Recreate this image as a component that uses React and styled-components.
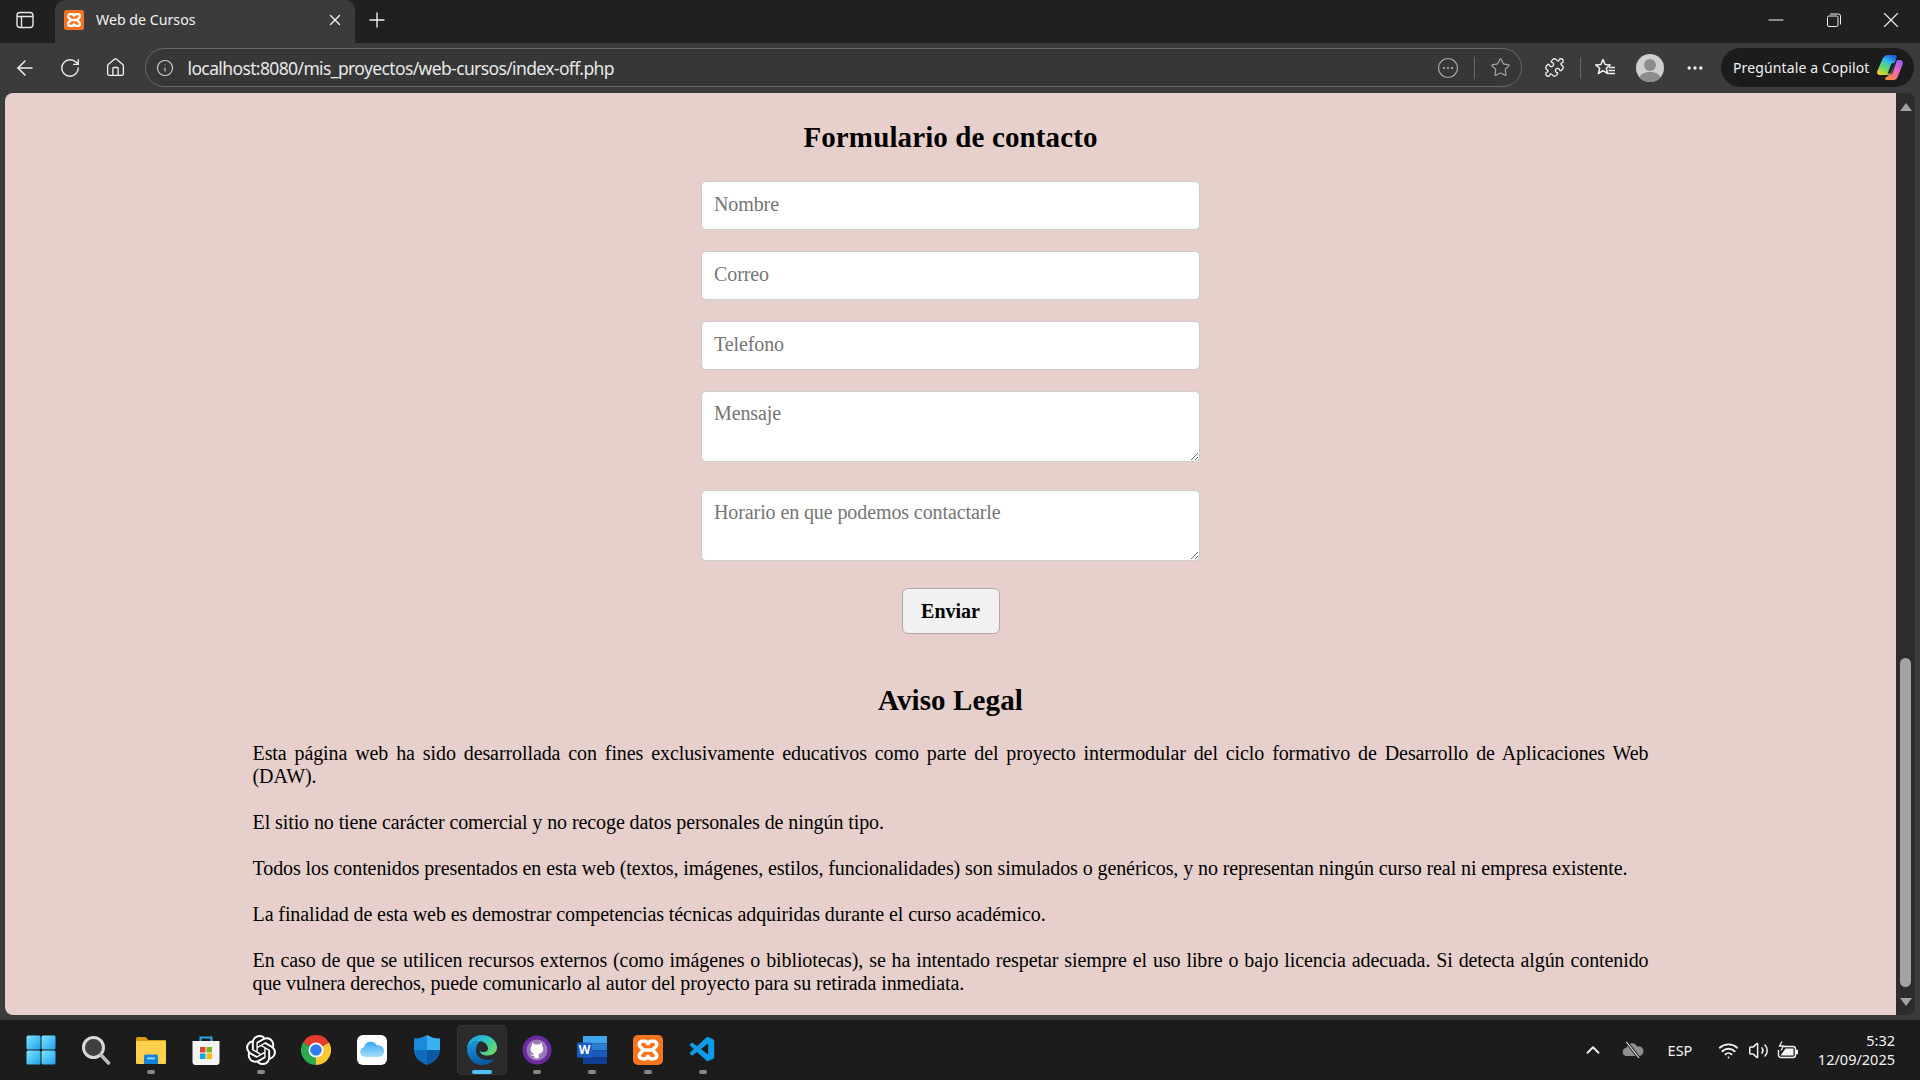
import React from "react";
import styled, { createGlobalStyle } from "styled-components";
import {
  ArrowLeft,
  RotateCw,
  Home,
  Info,
  Star,
  Puzzle,
  Ellipsis,
  Plus,
  X,
  Minus,
  ChevronUp,
  Wifi,
  Volume2,
} from "lucide-react";
import { SiOpenai } from "react-icons/si";
import { VscVscode } from "react-icons/vsc";

const GlobalStyle = createGlobalStyle`
  html, body {
    margin: 0;
    padding: 0;
    height: 100%;
    overflow: hidden;
    background: #3b3b3b;
  }
  * {
    box-sizing: border-box;
  }
`;

const Screen = styled.div`
  width: 1920px;
  height: 1080px;
  display: flex;
  flex-direction: column;
  overflow: hidden;
  font-family: "Noto Sans", "Open Sans", sans-serif;
`;

const TabStrip = styled.div`
  height: 43px;
  background: #202020;
  display: flex;
  align-items: stretch;
  color: #fff;
  flex: none;
`;

const SidebarButton = styled.div`
  width: 49px;
  margin-right: 6px;
  padding-bottom: 4px;
  display: flex;
  align-items: center;
  justify-content: center;
`;

const Tab = styled.div`
  width: 300px;
  background: #3b3b3b;
  border-radius: 10px 10px 0 0;
  display: flex;
  align-items: center;
  padding: 0 11px 4px 9px;
  gap: 12px;
`;

const TabTitle = styled.span`
  flex: 1;
  font-size: 14.2px;
  color: #f2f2f2;
  white-space: nowrap;
`;

const NewTab = styled.div`
  width: 44px;
  padding-bottom: 4px;
  display: flex;
  align-items: center;
  justify-content: center;
`;

const WindowControls = styled.div`
  margin-left: auto;
  display: flex;
`;

const WindowButton = styled.div`
  width: 57.6px;
  padding-bottom: 4px;
  display: flex;
  align-items: center;
  justify-content: center;
`;

const Toolbar = styled.div`
  height: 50px;
  background: #3b3b3b;
  display: flex;
  align-items: center;
  padding: 0 6px 1px 2.5px;
  color: #f0f0f0;
  flex: none;
`;

const ToolButton = styled.div`
  width: ${({ $w }) => $w || 30}px;
  height: 34px;
  margin-left: ${({ $ml }) => $ml || 0}px;
  flex: none;
  display: flex;
  align-items: center;
  justify-content: center;
`;

const AddressBar = styled.div`
  width: 1377px;
  height: 39px;
  margin-left: 7.5px;
  border: 1px solid #6a6a6a;
  border-radius: 20px;
  background: #373737;
  display: flex;
  align-items: center;
  padding: 0 6px 0 7px;
  flex: none;
`;

const Url = styled.span`
  margin-left: 10.5px;
  font-size: 17.5px;
  letter-spacing: -0.62px;
  color: #e8e8e8;
  white-space: nowrap;
`;

const AddressEnd = styled.div`
  margin-left: auto;
  display: flex;
  align-items: center;
`;

const Divider = styled.div`
  width: 1px;
  height: 22px;
  background: #666;
  margin-left: ${({ $ml }) => $ml || 0}px;
  flex: none;
`;

const CopilotPill = styled.div`
  width: 193px;
  height: 39px;
  margin-left: 11px;
  border-radius: 20px;
  background: #1c1c1c;
  display: flex;
  align-items: center;
  padding: 0 10px 0 12px;
  justify-content: space-between;
  flex: none;
`;

const CopilotText = styled.span`
  font-size: 14px;
  letter-spacing: 0.12px;
  color: #f2f2f2;
  white-space: nowrap;
`;

const Viewport = styled.div`
  flex: 1;
  min-height: 0;
  background: #3b3b3b;
  display: flex;
  padding: 0 5px 5px;
`;

const Page = styled.main`
  flex: 1;
  background: #e7d0cc;
  border-radius: 8px 0 0 8px;
  padding-top: 27px;
  overflow: hidden;
  font-family: "Liberation Serif", "Times New Roman", serif;
  color: #000;
`;

const Heading = styled.h2`
  margin: 0;
  font-size: 29px;
  letter-spacing: 0.12px;
  line-height: 34px;
  font-weight: 700;
  text-align: center;
`;

const ContactForm = styled.form`
  width: 499px;
  margin: 27px auto 0;
  display: flex;
  flex-direction: column;
  align-items: center;
`;

const fieldStyles = `
  width: 100%;
  display: block;
  border: 1px solid #ccc;
  border-radius: 5px;
  background: #fff;
  font-family: "Liberation Serif", "Times New Roman", serif;
  font-size: 20px;
  letter-spacing: -0.1px;
  outline: none;
  &::placeholder { color: #757575; }
`;

const TextInput = styled.input`
  ${fieldStyles}
  height: 49px;
  padding: 0 12px 3px;
  margin-bottom: 21px;
`;

const TextArea = styled.textarea`
  ${fieldStyles}
  height: 71px;
  padding: 10px 12px 0;
  margin-bottom: ${({ $mb }) => $mb}px;
  resize: vertical;
`;

const SendButton = styled.button`
  width: 98px;
  height: 46px;
  border: 1px solid #aaa;
  border-radius: 6px;
  background: #f1f1f1;
  font-family: "Liberation Serif", "Times New Roman", serif;
  font-size: 20px;
  font-weight: 700;
  color: #000;
`;

const LegalSection = styled.section`
  margin-top: 49px;
`;

const LegalText = styled.p`
  width: 1396px;
  margin: 25px auto 0;
  font-size: 20px;
  letter-spacing: -0.09px;
  line-height: 23px;
  text-align: justify;
`;

const ScrollTrack = styled.div`
  width: 19px;
  background: #2c2c2c;
  border-radius: 0 8px 8px 0;
  padding: 10px 4px 9px;
  display: flex;
  flex-direction: column;
  align-items: center;
`;

const ArrowUp = styled.div`
  width: 0;
  height: 0;
  border-left: 6.5px solid transparent;
  border-right: 6.5px solid transparent;
  border-bottom: 8px solid #a3a3a3;
`;

const ArrowDown = styled.div`
  width: 0;
  height: 0;
  border-left: 6.5px solid transparent;
  border-right: 6.5px solid transparent;
  border-top: 8px solid #a3a3a3;
`;

const Thumb = styled.div`
  width: 11px;
  height: 329px;
  margin-top: auto;
  margin-bottom: 11px;
  border-radius: 6px;
  background: #a3a3a3;
`;

const Taskbar = styled.footer`
  height: 60px;
  background: #1c1c1c;
  display: flex;
  align-items: center;
  padding: 0 25px 0 15.5px;
  flex: none;
`;

const TaskApps = styled.div`
  display: flex;
  gap: 5.2px;
`;

const TaskButton = styled.div`
  position: relative;
  width: 50px;
  height: 50px;
  border-radius: 5px;
  display: flex;
  align-items: center;
  justify-content: center;
  background: ${({ $active }) => ($active ? "#2b2b2b" : "transparent")};
  box-shadow: ${({ $active }) => ($active ? "inset 0 0 0 1px #333" : "none")};
`;

const RunDot = styled.span`
  position: absolute;
  left: 50%;
  bottom: 1px;
  width: ${({ $active }) => ($active ? 20 : 8)}px;
  height: 4px;
  border-radius: 2px;
  transform: translateX(-50%);
  background: ${({ $active }) => ($active ? "#4cc2ff" : "#8a8a8a")};
`;

const Tray = styled.div`
  margin-left: auto;
  display: flex;
  align-items: center;
  color: #fff;
`;

const TrayItem = styled.div`
  width: ${({ $w }) => $w || 30}px;
  margin-left: ${({ $ml }) => $ml || 0}px;
  display: flex;
  align-items: center;
  justify-content: center;
  font-size: 14.5px;
  color: #f2f2f2;
`;

const Clock = styled.div`
  margin-left: auto;
  width: 92px;
  text-align: right;
  font-size: 14.5px;
  line-height: 19px;
  color: #f2f2f2;
`;

const XamppIcon = ({ size = 20, radius = 3 }) => (
  <svg width={size} height={size} viewBox="0 0 24 24">
    <rect width="24" height="24" rx={radius} fill="#f4751f" />
    <path
      d="M7.500 5h2.600c.9 0 1.100 1.800 1.900 1.800S13 5 13.900 5h2.600A2.500 2.500 0 0 1 19 7.500c0 2.400-3 2.900-3 4.500s3 2.100 3 4.500a2.500 2.500 0 0 1-2.500 2.500h-2.600c-.9 0-1.100-1.800-1.900-1.800s-1 1.800-1.900 1.800H7.500A2.500 2.500 0 0 1 5 16.500c0-2.400 3-2.900 3-4.500S5 9.900 5 7.500A2.500 2.500 0 0 1 7.500 5zM8 12h8"
      fill="none"
      stroke="#fff"
      strokeWidth="2.800"
    />
  </svg>
);

const SidebarIcon = () => (
  <svg width="18" height="18" viewBox="0 0 18 18" fill="none" stroke="#e6e6e6" strokeWidth="1.400">
    <rect x="1" y="1.500" width="16" height="15" rx="3" />
    <path d="M1 5.500h16M5.500 5.500v11" />
  </svg>
);

const RestoreIcon = () => (
  <svg width="14" height="14" viewBox="0 0 14 14" fill="none" stroke="#f0f0f0" strokeWidth="1">
    <rect x="0.500" y="3" width="10.500" height="10.500" rx="1.500" />
    <path d="M3 1h8.500A2 2 0 0 1 13.500 3v8.500" />
  </svg>
);

const ReaderIcon = () => (
  <svg width="22" height="22" viewBox="0 0 22 22" fill="none">
    <circle cx="11" cy="11" r="9.500" stroke="#a8a8a8" strokeWidth="1.200" />
    <circle cx="7" cy="11" r="1.100" fill="#b4b4b4" />
    <circle cx="11" cy="11" r="1.100" fill="#b4b4b4" />
    <circle cx="15" cy="11" r="1.100" fill="#b4b4b4" />
  </svg>
);

const FavoritesIcon = () => (
  <svg width="22" height="22" viewBox="0 0 22 22" fill="none" stroke="#f0f0f0" strokeWidth="1.500" strokeLinejoin="round">
    <path d="M9 2.500l2.100 5 5.200.4-4 3.400 1.300 5.200L9 13.700l-4.600 2.800 1.300-5.200-4-3.400 5.200-.4z" />
    <path d="M15 10.500h6M14.500 13.500h6.500M14 16.500h7" />
  </svg>
);

const Avatar = () => (
  <svg width="28" height="28" viewBox="0 0 28 28">
    <circle cx="14" cy="14" r="14" fill="#cfcfcf" />
    <circle cx="14" cy="11" r="6" fill="#8c8c8c" />
    <path d="M3.500 23.500C5 19.500 9 18 14 18s9 1.500 10.500 5.500A14 14 0 0 1 3.500 23.500z" fill="#8c8c8c" />
  </svg>
);

const CopilotLogo = () => (
  <svg width="28" height="27" viewBox="0 0 28 27">
    <defs>
      <linearGradient id="copA" x1="0.700" y1="0" x2="0.200" y2="1">
        <stop offset="0" stopColor="#1c5fe0" />
        <stop offset="0.300" stopColor="#2fb8ea" />
        <stop offset="0.650" stopColor="#62d86a" />
        <stop offset="1" stopColor="#f3d324" />
      </linearGradient>
      <linearGradient id="copB" x1="0.800" y1="0" x2="0.300" y2="1">
        <stop offset="0" stopColor="#9a5cf0" />
        <stop offset="0.500" stopColor="#ea68c0" />
        <stop offset="1" stopColor="#f88a3c" />
      </linearGradient>
    </defs>
    <path d="M12 1h6.500c1 0 1.800.6 2.200 1.500L16 18c-.6 2-2 3-4 3H4C1.500 21 .5 19 1.300 17L6.500 5C8 2.500 9.500 1 12 1z" fill="url(#copA)" />
    <path d="M21 6h2.500c2.500 0 4 2 3.300 4L22 22c-1 3-2.500 4-5 4h-6c-1 0-1.800-.5-2.300-1.500L13 21c2 0 3.500-1 4-3z" fill="url(#copB)" />
    <path d="M15.500 9.500l3.500-1-4 10.500-3.500 1z" fill="#1c1c1c" />
  </svg>
);

const StartIcon = () => (
  <svg width="30" height="30" viewBox="0 0 30 30">
    <defs>
      <linearGradient id="startA" x1="0" y1="0" x2="1" y2="1">
        <stop offset="0" stopColor="#7fe6ff" />
        <stop offset="1" stopColor="#1f9fe8" />
      </linearGradient>
    </defs>
    <rect x="0.500" y="0.500" width="14" height="14" rx="1.500" fill="url(#startA)" />
    <rect x="15.500" y="0.500" width="14" height="14" rx="1.500" fill="url(#startA)" />
    <rect x="0.500" y="15.500" width="14" height="14" rx="1.500" fill="url(#startA)" />
    <rect x="15.500" y="15.500" width="14" height="14" rx="1.500" fill="url(#startA)" />
  </svg>
);

const SearchIcon = () => (
  <svg width="30" height="30" viewBox="0 0 30 30" fill="none">
    <circle cx="12.500" cy="12.500" r="10" fill="#3f3f3f" stroke="#d8d8d8" strokeWidth="3" />
    <path d="M20 20l7.500 8" stroke="#bcbcbc" strokeWidth="3.500" strokeLinecap="round" />
  </svg>
);

const FolderIcon = () => (
  <svg width="30" height="30" viewBox="0 0 30 30">
    <path d="M0 3.500A1.500 1.500 0 0 1 1.500 2h8l3 3H30v4H0z" fill="#d99a10" />
    <path d="M0 6h28.500A1.500 1.500 0 0 1 30 7.500V28a1 1 0 0 1-1 1H1a1 1 0 0 1-1-1z" fill="#fccf4d" />
    <path d="M8 21a1.500 1.500 0 0 1 1.500-1.500h11A1.500 1.500 0 0 1 22 21v8H8z" fill="#1683d8" />
    <rect x="11" y="22.500" width="8" height="1.800" rx="0.900" fill="#9fdcff" />
  </svg>
);

const StoreIcon = () => (
  <svg width="30" height="30" viewBox="0 0 30 30">
    <path d="M9.500 7V2.500h11V7" fill="none" stroke="#27a9e6" strokeWidth="2" />
    <path d="M1.500 6h27v21a3 3 0 0 1-3 3h-21a3 3 0 0 1-3-3z" fill="#f4f4f4" />
    <rect x="9" y="12" width="5.500" height="5.500" fill="#e8452c" />
    <rect x="15.500" y="12" width="5.500" height="5.500" fill="#7cb518" />
    <rect x="9" y="18.500" width="5.500" height="5.500" fill="#0ea5e9" />
    <rect x="15.500" y="18.500" width="5.500" height="5.500" fill="#fbb80f" />
  </svg>
);

const ChromeIcon = () => (
  <svg width="30" height="30" viewBox="0 0 30 30">
    <path d="M15 15L2 7.500A15 15 0 0 1 28 7.500z" fill="#e33b2e" />
    <path d="M15 15L15 30A15 15 0 0 1 2 7.500z" fill="#2da94f" />
    <path d="M15 15L28 7.500A15 15 0 0 1 15 30z" fill="#fcc934" />
    <circle cx="15" cy="15" r="7.500" fill="#fff" />
    <circle cx="15" cy="15" r="5.800" fill="#2f7cf0" />
  </svg>
);

const CloudAppIcon = () => (
  <svg width="30" height="30" viewBox="0 0 30 30">
    <defs>
      <linearGradient id="cloudA" x1="0" y1="0" x2="0" y2="1">
        <stop offset="0" stopColor="#38a8f5" />
        <stop offset="1" stopColor="#a6dcfa" />
      </linearGradient>
    </defs>
    <rect width="30" height="30" rx="6" fill="#fff" />
    <path d="M8 22a5 5 0 0 1-1-9.800A7 7 0 0 1 20 10.500a5.800 5.800 0 0 1 2.500 11.500z" fill="url(#cloudA)" />
  </svg>
);

const ShieldIcon = () => (
  <svg width="30" height="30" viewBox="0 0 30 30">
    <path d="M15 0c4 2.500 8 3.500 13 3.500V15H15z" fill="#3ab0ee" />
    <path d="M15 0C11 2.500 7 3.500 2 3.500V15h13z" fill="#1b8ad8" />
    <path d="M2 15c0 7 5.500 12.500 13 15V15z" fill="#0f6cbd" />
    <path d="M28 15c0 7-5.500 12.500-13 15V15z" fill="#0b5aa3" />
  </svg>
);

const EdgeIcon = () => (
  <svg width="30" height="30" viewBox="0 0 30 30">
    <defs>
      <linearGradient id="edgeA" x1="0" y1="0.200" x2="1" y2="0.800">
        <stop offset="0" stopColor="#1b9de2" />
        <stop offset="0.500" stopColor="#2fc4c6" />
        <stop offset="1" stopColor="#72dc58" />
      </linearGradient>
      <linearGradient id="edgeB" x1="0" y1="0" x2="0.300" y2="1">
        <stop offset="0" stopColor="#1a9de0" />
        <stop offset="1" stopColor="#0c59a4" />
      </linearGradient>
    </defs>
    <path d="M15 0C6 0 0 6.500 0 14c2-5.500 7-8 11.500-8 5.500 0 9.500 3.500 9.500 7.500 0 2.500-2 3.500-4.500 3.500-1.500 0-3-.5-3.500-1 0 2.500 3 4.500 7.500 4.500 5.500 0 9.500-3.500 9.500-8C30 5.500 23 0 15 0z" fill="url(#edgeA)" />
    <path d="M11.500 6C7 6 2 8.500 0 14c0 8.500 6.500 16 15 16 5.500 0 10-2.500 12.500-6.500-2 1-4.500 1.500-7 1.500C14 25 9 21 9 15.500 9 11.500 10.500 8 13 6.200c-.5-.1-1-.2-1.500-.2z" fill="url(#edgeB)" />
  </svg>
);

const GithubIcon = () => (
  <svg width="30" height="30" viewBox="0 0 30 30">
    <circle cx="15" cy="15" r="14.500" fill="#6b2aa0" />
    <circle cx="15" cy="15" r="10.500" fill="#9a7ab5" />
    <path
      d="M10.200 7.800l3 1.800h3.600l3-1.800.4 3.400c1 1.400 1.300 3 .6 4.800-.8 1.900-2.600 2.700-4 3v4.300h-4.600v-2.500c-1.800.5-3-.4-3.800-1.800.8.300 1.600 1 2.400.9.500 0 1-.3 1.300-.9-1.300-.4-2.500-1.200-3.100-2.900-.7-1.800-.4-3.400.6-4.800z"
      fill="#fff"
    />
  </svg>
);

const WordIcon = () => (
  <svg width="30" height="30" viewBox="0 0 30 30">
    <rect x="6" y="1" width="24" height="7.500" fill="#41a5ee" />
    <rect x="6" y="8.500" width="24" height="7" fill="#2b7cd3" />
    <rect x="6" y="15.500" width="24" height="7" fill="#185abd" />
    <rect x="6" y="22.500" width="24" height="6.500" fill="#103f91" />
    <rect x="0" y="7.500" width="15" height="15" rx="1" fill="#1a5dc0" />
    <text x="7.500" y="19" textAnchor="middle" fontSize="12" fontWeight="700" fill="#fff" fontFamily="Noto Sans, sans-serif">W</text>
  </svg>
);

const OneDriveOff = () => (
  <svg width="22" height="18" viewBox="0 0 22 18">
    <path d="M5 15a4 4 0 0 1-.5-8 5.500 5.500 0 0 1 10.500-1.500 4.800 4.800 0 0 1 3 9.500z" fill="#8f8f8f" />
    <path d="M5 1.500l12 15.500" stroke="#1c1c1c" strokeWidth="3" />
    <path d="M4.500 1l12.500 16" stroke="#eee" strokeWidth="1.200" />
  </svg>
);

const BatteryIcon = () => (
  <svg width="22" height="19" viewBox="0 0 22 19" fill="none">
    <path d="M7 5.500h9A2.500 2.500 0 0 1 18.500 8v6a2.500 2.500 0 0 1-2.500 2.500H4A2.500 2.500 0 0 1 1.500 14V9" stroke="#f2f2f2" strokeWidth="1.400" />
    <rect x="19" y="8.500" width="2" height="5" rx="1" fill="#f2f2f2" />
    <path d="M8.500 7.500H16.500V14.500H3.500z" fill="#f2f2f2" />
    <path d="M5 .500L2.500 5h4L4 9.500" stroke="#f2f2f2" strokeWidth="1.300" />
  </svg>
);

const apps = [
  { id: "start", icon: <StartIcon /> },
  { id: "search", icon: <SearchIcon /> },
  { id: "files", icon: <FolderIcon />, running: true },
  { id: "store", icon: <StoreIcon /> },
  { id: "chatgpt", icon: <SiOpenai size={30} color="#fff" />, running: true },
  { id: "chrome", icon: <ChromeIcon /> },
  { id: "icloud", icon: <CloudAppIcon /> },
  { id: "defender", icon: <ShieldIcon /> },
  { id: "edge", icon: <EdgeIcon />, running: true, active: true },
  { id: "github", icon: <GithubIcon />, running: true },
  { id: "word", icon: <WordIcon />, running: true },
  { id: "xampp", icon: <XamppIcon size={30} radius={4} />, running: true },
  { id: "vscode", icon: <VscVscode size={30} color="#0f9be8" />, running: true },
];

export default function App() {
  return (
    <Screen>
      <GlobalStyle />
      <TabStrip>
        <SidebarButton>
          <SidebarIcon />
        </SidebarButton>
        <Tab>
          <XamppIcon />
          <TabTitle>Web de Cursos</TabTitle>
          <X size={18} color="#f0f0f0" strokeWidth={1.8} />
        </Tab>
        <NewTab>
          <Plus size={24} color="#f0f0f0" strokeWidth={1.4} />
        </NewTab>
        <WindowControls>
          <WindowButton>
            <Minus size={24} color="#f0f0f0" strokeWidth={1} />
          </WindowButton>
          <WindowButton>
            <RestoreIcon />
          </WindowButton>
          <WindowButton>
            <X size={26} color="#f0f0f0" strokeWidth={1} />
          </WindowButton>
        </WindowControls>
      </TabStrip>

      <Toolbar>
        <ToolButton $w={45}>
          <ArrowLeft size={24} strokeWidth={1.5} />
        </ToolButton>
        <ToolButton $w={45}>
          <RotateCw size={22} strokeWidth={1.5} />
        </ToolButton>
        <ToolButton $w={45}>
          <Home size={21} strokeWidth={1.5} />
        </ToolButton>
        <AddressBar>
          <ToolButton $w={24}>
            <Info size={18} strokeWidth={1.5} color="#d0d0d0" />
          </ToolButton>
          <Url>localhost:8080/mis_proyectos/web-cursos/index-off.php</Url>
          <AddressEnd>
            <ToolButton>
              <ReaderIcon />
            </ToolButton>
            <Divider $ml={11} />
            <ToolButton $ml={10}>
              <Star size={21} strokeWidth={1.3} color="#a8a8a8" />
            </ToolButton>
          </AddressEnd>
        </AddressBar>
        <ToolButton $ml={17}>
          <Puzzle size={21} strokeWidth={1.5} />
        </ToolButton>
        <Divider $ml={11} />
        <ToolButton $ml={9}>
          <FavoritesIcon />
        </ToolButton>
        <ToolButton $ml={15}>
          <Avatar />
        </ToolButton>
        <ToolButton $ml={15}>
          <Ellipsis size={20} strokeWidth={2} />
        </ToolButton>
        <CopilotPill>
          <CopilotText>Pregúntale a Copilot</CopilotText>
          <CopilotLogo />
        </CopilotPill>
      </Toolbar>

      <Viewport>
        <Page>
          <Heading>Formulario de contacto</Heading>
          <ContactForm onSubmit={(e) => e.preventDefault()}>
            <TextInput type="text" placeholder="Nombre" />
            <TextInput type="email" placeholder="Correo" />
            <TextInput type="tel" placeholder="Telefono" />
            <TextArea placeholder="Mensaje" $mb={28} />
            <TextArea placeholder="Horario en que podemos contactarle" $mb={27} />
            <SendButton type="submit">Enviar</SendButton>
          </ContactForm>
          <LegalSection>
            <Heading>Aviso Legal</Heading>
            <LegalText>
              Esta página web ha sido desarrollada con fines exclusivamente educativos como parte del proyecto
              intermodular del ciclo formativo de Desarrollo de Aplicaciones Web (DAW).
              <br />
              <br />
              El sitio no tiene carácter comercial y no recoge datos personales de ningún tipo.
              <br />
              <br />
              Todos los contenidos presentados en esta web (textos, imágenes, estilos, funcionalidades) son simulados o
              genéricos, y no representan ningún curso real ni empresa existente.
              <br />
              <br />
              La finalidad de esta web es demostrar competencias técnicas adquiridas durante el curso académico.
              <br />
              <br />
              En caso de que se utilicen recursos externos (como imágenes o bibliotecas), se ha intentado respetar
              siempre el uso libre o bajo licencia adecuada. Si detecta algún contenido que vulnera derechos, puede
              comunicarlo al autor del proyecto para su retirada inmediata.
            </LegalText>
          </LegalSection>
        </Page>
        <ScrollTrack>
          <ArrowUp />
          <Thumb />
          <ArrowDown />
        </ScrollTrack>
      </Viewport>

      <Taskbar>
        <TaskApps>
          {apps.map((app) => (
            <TaskButton key={app.id} $active={app.active}>
              {app.icon}
              {app.running && <RunDot $active={app.active} />}
            </TaskButton>
          ))}
        </TaskApps>
        <Tray>
          <TrayItem>
            <ChevronUp size={22} strokeWidth={2} />
          </TrayItem>
          <TrayItem $ml={10}>
            <OneDriveOff />
          </TrayItem>
          <TrayItem $w={40} $ml={12}>
            ESP
          </TrayItem>
          <TrayItem $ml={13}>
            <Wifi size={21} strokeWidth={2.1} />
          </TrayItem>
          <TrayItem>
            <Volume2 size={21} strokeWidth={1.7} />
          </TrayItem>
          <TrayItem>
            <BatteryIcon />
          </TrayItem>
          <Clock>
            5:32
            <br />
            12/09/2025
          </Clock>
        </Tray>
      </Taskbar>
    </Screen>
  );
}
